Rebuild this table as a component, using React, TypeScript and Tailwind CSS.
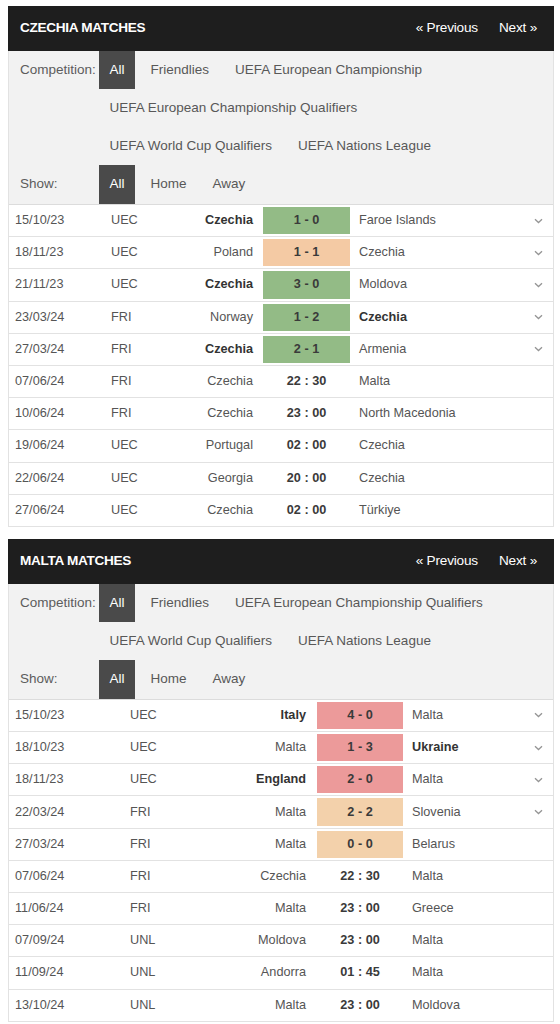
import React from "react";

type Row = {
  d: string;
  c: string;
  h: string;
  hb?: boolean;
  s: string;
  a: string;
  ab?: boolean;
  bg?: string;
  chev?: boolean;
};

const G = "bg-[#93bb86]";
const O = "bg-[#f4caa4]";
const R = "bg-[#ec9a9a]";
const T = "bg-[#f3d1ab]";

const czRows: Row[] = [
  { d: "15/10/23", c: "UEC", h: "Czechia", hb: true, s: "1 - 0", a: "Faroe Islands", bg: G, chev: true },
  { d: "18/11/23", c: "UEC", h: "Poland", s: "1 - 1", a: "Czechia", bg: O, chev: true },
  { d: "21/11/23", c: "UEC", h: "Czechia", hb: true, s: "3 - 0", a: "Moldova", bg: G, chev: true },
  { d: "23/03/24", c: "FRI", h: "Norway", s: "1 - 2", a: "Czechia", ab: true, bg: G, chev: true },
  { d: "27/03/24", c: "FRI", h: "Czechia", hb: true, s: "2 - 1", a: "Armenia", bg: G, chev: true },
  { d: "07/06/24", c: "FRI", h: "Czechia", s: "22 : 30", a: "Malta" },
  { d: "10/06/24", c: "FRI", h: "Czechia", s: "23 : 00", a: "North Macedonia" },
  { d: "19/06/24", c: "UEC", h: "Portugal", s: "02 : 00", a: "Czechia" },
  { d: "22/06/24", c: "UEC", h: "Georgia", s: "20 : 00", a: "Czechia" },
  { d: "27/06/24", c: "UEC", h: "Czechia", s: "02 : 00", a: "Türkiye" },
];

const mtRows: Row[] = [
  { d: "15/10/23", c: "UEC", h: "Italy", hb: true, s: "4 - 0", a: "Malta", bg: R, chev: true },
  { d: "18/10/23", c: "UEC", h: "Malta", s: "1 - 3", a: "Ukraine", ab: true, bg: R, chev: true },
  { d: "18/11/23", c: "UEC", h: "England", hb: true, s: "2 - 0", a: "Malta", bg: R, chev: true },
  { d: "22/03/24", c: "FRI", h: "Malta", s: "2 - 2", a: "Slovenia", bg: T, chev: true },
  { d: "27/03/24", c: "FRI", h: "Malta", s: "0 - 0", a: "Belarus", bg: T },
  { d: "07/06/24", c: "FRI", h: "Czechia", s: "22 : 30", a: "Malta" },
  { d: "11/06/24", c: "FRI", h: "Malta", s: "23 : 00", a: "Greece" },
  { d: "07/09/24", c: "UNL", h: "Moldova", s: "23 : 00", a: "Malta" },
  { d: "11/09/24", c: "UNL", h: "Andorra", s: "01 : 45", a: "Malta" },
  { d: "13/10/24", c: "UNL", h: "Malta", s: "23 : 00", a: "Moldova" },
];

function Chevron() {
  return (
    <svg width="9" height="6" viewBox="0 0 9 6">
      <path d="M1 1.2l3.5 3.3L8 1.2" fill="none" stroke="#959595" strokeWidth="1.3" />
    </svg>
  );
}

function FilterItem({ label, active }: { label: string; active?: boolean }) {
  return (
    <div
      className={
        "h-[38px] flex items-center px-[10.5px] " +
        (active ? "bg-[#4a4a4a] text-white" : "text-[#585858]")
      }
    >
      {label}
    </div>
  );
}

function Section({
  title,
  comps,
  rows,
  grid,
}: {
  title: string;
  comps: string[];
  rows: Row[];
  grid: "cz" | "mt";
}) {
  const gridCls =
    grid === "cz"
      ? "grid grid-cols-[95px_80px_79px_87px_1fr_30px]"
      : "grid grid-cols-[114px_77px_117px_86px_1fr_30px]";
  const compPl = "pl-[7px]";
  const homePr = grid === "cz" ? "pr-[10px]" : "pr-[11px]";
  return (
    <div className="w-[546px] ml-[8px]">
      <div className="h-[45px] bg-[#1e1e1e] flex items-center justify-between pl-[12px] pr-[17px]">
        <div className="text-white font-bold text-[13.6px] tracking-[-0.3px]">{title}</div>
        <div className="flex items-center gap-[21px] text-white text-[13.6px] tracking-[-0.2px]">
          <span>« Previous</span>
          <span>Next »</span>
        </div>
      </div>
      <div className="border-x border-[#e2e2e2]">
        <div className="bg-[#f2f2f2] text-[13.5px] border-b border-[#dcdcdc]">
          <div className="flex">
            <div className="w-[90px] pl-[11px] h-[38px] flex items-center text-[#5c5c5c]">Competition:</div>
            <div className="flex flex-wrap gap-x-[5px] w-[450px]">
              {comps.map((c, i) => (
                <FilterItem key={c} label={c} active={i === 0} />
              ))}
            </div>
          </div>
          <div className="flex h-[39px]">
            <div className="w-[90px] pl-[11px] flex items-center text-[#5c5c5c]">Show:</div>
            <div className="flex gap-x-[5px]">
              <div className="h-[39px] flex items-center px-[10.5px] bg-[#4a4a4a] text-white">All</div>
              <div className="h-[39px] flex items-center px-[10.5px] text-[#585858]">Home</div>
              <div className="h-[39px] flex items-center px-[10.5px] text-[#585858]">Away</div>
            </div>
          </div>
        </div>
        <div className="bg-white text-[12.7px] text-[#555]">
          {rows.map((r, i) => (
            <div key={i} className={gridCls + " h-[32.2px] border-b border-[#e2e2e2]"}>
              <div className="pl-[6px] flex items-center">{r.d}</div>
              <div className={compPl + " flex items-center"}>{r.c}</div>
              <div
                className={
                  homePr +
                  " flex items-center justify-end " +
                  (r.hb ? "font-bold text-[#333]" : "")
                }
              >
                {r.h}
              </div>
              <div
                className={
                  "my-[2px] flex items-center justify-center font-bold text-[#3a3a3a] " +
                  (r.bg ? r.bg : "")
                }
              >
                {r.s}
              </div>
              <div className={"pl-[9px] flex items-center " + (r.ab ? "font-bold text-[#333]" : "")}>
                {r.a}
              </div>
              <div className="flex items-center justify-center">{r.chev ? <Chevron /> : null}</div>
            </div>
          ))}
        </div>
      </div>
    </div>
  );
}

export default function App() {
  return (
    <div
      className="w-[560px] h-[1024px] bg-white overflow-hidden pt-[6px]"
      style={{ fontFamily: '"Liberation Sans", Arial, sans-serif' }}
    >
      <Section
        title="CZECHIA MATCHES"
        grid="cz"
        comps={[
          "All",
          "Friendlies",
          "UEFA European Championship",
          "UEFA European Championship Qualifiers",
          "UEFA World Cup Qualifiers",
          "UEFA Nations League",
        ]}
        rows={czRows}
      />
      <div className="h-[12px]" />
      <Section
        title="MALTA MATCHES"
        grid="mt"
        comps={[
          "All",
          "Friendlies",
          "UEFA European Championship Qualifiers",
          "UEFA World Cup Qualifiers",
          "UEFA Nations League",
        ]}
        rows={mtRows}
      />
    </div>
  );
}
